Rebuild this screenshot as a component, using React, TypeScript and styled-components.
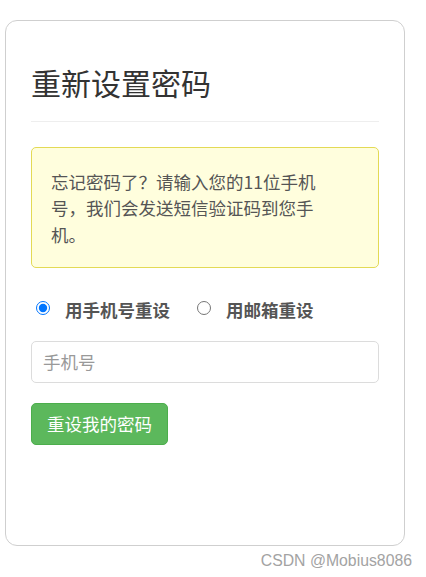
import { useState } from "react";
import styled, { createGlobalStyle } from "styled-components";

const GlobalStyle = createGlobalStyle`
    body {
        margin: 0;
        background: #fff;
        font-family: "Liberation Sans", "Noto Sans CJK SC", sans-serif;
    }
`;

const Page = styled.div`
    width: 426px;
    height: 577px;
    overflow: hidden;
`;

const Card = styled.div`
    box-sizing: border-box;
    width: 400px;
    height: 526px;
    margin: 20px 0 0 5px;
    padding: 45px 25px 0 25px;
    border: 1px solid #cfcfcf;
    border-radius: 12px;
    font-family: "Noto Sans CJK SC", sans-serif;
`;

const Title = styled.h3`
    margin: 0;
    font-size: 30px;
    line-height: 33px;
    font-weight: 400;
    color: #333;
`;

const Divider = styled.hr`
    margin: 22px 0 25px 0;
    border: 0;
    border-top: 1px solid #eee;
`;

const Alert = styled.div`
    padding: 21px 57px 19px 19px;
    background: #fffedd;
    border: 1px solid #e3da55;
    border-radius: 5px;
    color: #555;
    font-size: 17.5px;
    line-height: 26.3px;
`;

const RadioRow = styled.div`
    display: flex;
    align-items: center;
    margin-top: 29px;
    height: 26px;
`;

const RadioLabel = styled.label`
    display: flex;
    align-items: center;
    margin-right: 22px;
    font-size: 17.5px;
    font-weight: 700;
    color: #555;
    cursor: pointer;
`;

const Radio = styled.input`
    width: 14px;
    height: 14px;
    margin: 0 15px 4px 5px;
    accent-color: #0075ff;
`;

const Field = styled.input`
    box-sizing: border-box;
    display: block;
    width: 100%;
    height: 42px;
    margin-top: 18px;
    padding: 0 11px;
    border: 1px solid #dcdcdc;
    border-radius: 5px;
    font-family: "Noto Sans CJK SC", sans-serif;
    font-size: 17.5px;
    color: #555;
    outline: none;

    &::placeholder {
        color: #999;
    }
`;

const SubmitButton = styled.button`
    display: block;
    height: 42px;
    margin-top: 20px;
    padding: 0 15px;
    background: #5cb85c;
    border: 1px solid #4cae4c;
    border-radius: 5px;
    color: #fff;
    font-family: "Noto Sans CJK SC", sans-serif;
    font-size: 17.5px;
    cursor: pointer;
`;

const Watermark = styled.div`
    margin-top: 5px;
    padding-right: 14px;
    text-align: right;
    font-family: "Liberation Sans", sans-serif;
    font-size: 15.8px;
    line-height: 20px;
    color: #a3a3a3;
`;

export default function App() {
    const [mode, setMode] = useState("phone");
    return (
        <Page>
            <GlobalStyle />
            <Card>
                <Title>重新设置密码</Title>
                <Divider />
                <Alert>忘记密码了？请输入您的11位手机号，我们会发送短信验证码到您手机。</Alert>
                <RadioRow>
                    <RadioLabel>
                        <Radio type="radio" name="mode" checked={mode === "phone"} onChange={() => setMode("phone")} />
                        用手机号重设
                    </RadioLabel>
                    <RadioLabel>
                        <Radio type="radio" name="mode" checked={mode === "email"} onChange={() => setMode("email")} />
                        用邮箱重设
                    </RadioLabel>
                </RadioRow>
                <Field placeholder={mode === "phone" ? "手机号" : "邮箱"} />
                <SubmitButton>重设我的密码</SubmitButton>
            </Card>
            <Watermark>CSDN @Mobius8086</Watermark>
        </Page>
    );
}
